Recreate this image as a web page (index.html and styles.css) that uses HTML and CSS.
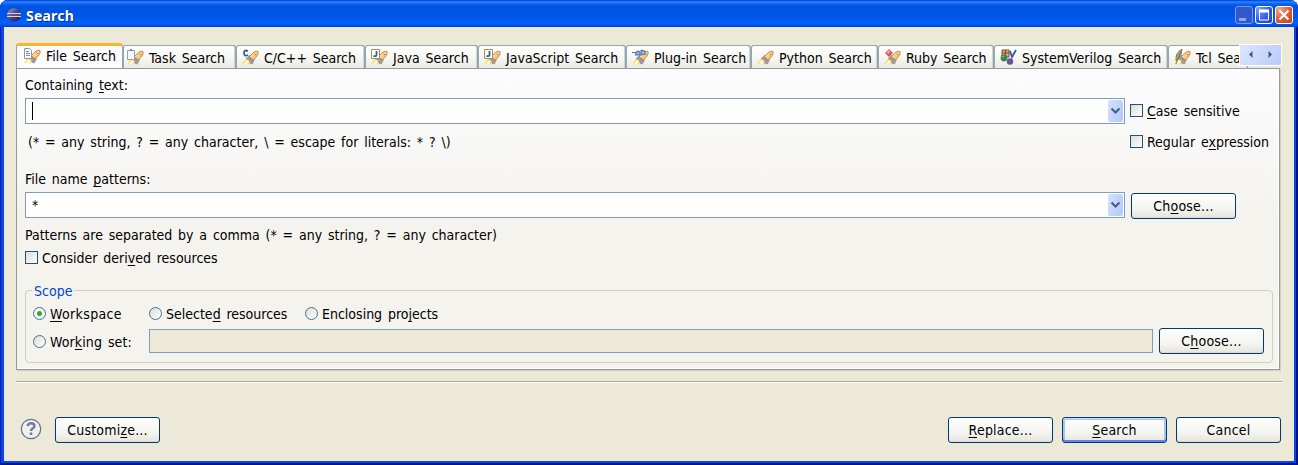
FILE: index.html
```html
<!DOCTYPE html>
<html lang="en">
<head>
<meta charset="utf-8">
<title>Search</title>
<link rel="stylesheet" href="styles.css">
</head>
<body>
<svg class="defs" width="0" height="0">
  <defs>
    <linearGradient id="gold" x1="0" y1="0" x2="1" y2="1"><stop offset="0" stop-color="#fff0b8"/><stop offset="1" stop-color="#f0aa50"/></linearGradient>
    <linearGradient id="ball" x1="0" y1="0" x2="1" y2="1"><stop offset="0" stop-color="#a6a0c8"/><stop offset=".5" stop-color="#4b427e"/><stop offset="1" stop-color="#231848"/></linearGradient>
    <g id="rocket">
      <path d="M0 15.5L3 10.5 5 9.5 9 13 6 15.5 4 14.5Z" fill="#ffdc70"/>
      <path d="M2 14.5L5 11 7 12.5 5 15Z" fill="#fffbe0"/>
      <path d="M4 9.5L8 6 12.5 10.5 10.5 15 8 14.5 7.5 11.5Z" fill="#a29ca3" stroke="#87808a" stroke-width=".5"/>
      <path d="M7 8L12 3Q14 1.8 16 2.5 16.8 4.5 15 7L11 11.5Z" fill="url(#gold)" stroke="#c58543" stroke-width=".9"/>
      <path d="M12.8 4.7l1.3 1.3M7.7 8.2l3.2 3.2" stroke="#8b7768" stroke-width="1"/>
    </g>
  </defs>
</svg>
<div class="window">
  <header class="titlebar">
    <svg class="logo" width="16" height="16" viewBox="0 0 16 16"><circle cx="8" cy="8" r="6.8" fill="url(#ball)"/><path d="M1 6.5h14M1 9.5h14" stroke="#d5d1ea" stroke-width="1"/><path d="M1 8h14" stroke="#6862a0" stroke-width="1"/></svg>
    <h1 class="title">Search</h1>
    <div class="controls">
      <span class="control dim"><svg width="17" height="17"><path d="M3 12.5h7" stroke="#8ea7ea" stroke-width="3"/></svg></span>
      <span class="control"><svg width="17" height="17"><path d="M3.5 4v9h9V4" fill="none" stroke="#fff"/><path d="M3 4h10" stroke="#fff" stroke-width="3"/></svg></span>
      <span class="control close"><svg width="17" height="17"><path d="M3.5 3.5l9 9M12.5 3.5l-9 9" stroke="#fff" stroke-width="2.2"/></svg></span>
    </div>
  </header>
  <main class="content">
    <nav class="tabs">
      <div class="tab active"><svg class="icon" viewBox="0 0 17 16"><use href="#rocket"/><path d="M.5 .5h5l2 2v8h-7z" fill="#f6f8fd" stroke="#8c9a9b"/><path d="M2 3.5h3M2 5.5h4M2 7.5h4" stroke="#7192b9"/></svg><span>File Search</span></div>
      <div class="tab task"><svg class="icon" viewBox="0 0 17 16"><use href="#rocket"/><path d="M.5 1.5h7v9h-7z" fill="#f4f7fe" stroke="#8fa0bd"/><path d="M3 0h2v1h1v1H2V1h1z" fill="#7f8ca4"/></svg><span>Task Search</span></div>
      <div class="tab cpp"><svg class="icon" viewBox="0 0 17 16"><use href="#rocket"/><path d="M6 2.2Q2 .2 2 4t4 2" fill="none" stroke="#286498" stroke-width="1.8"/></svg><span>C/C++ Search</span></div>
      <div class="tab java"><svg class="icon" viewBox="0 0 17 16"><use href="#rocket"/><path d="M.5 .5h8v9h-8z" fill="#fff" stroke="#a78e56"/><path d="M5.5 2v4q0 1.5-3 1" fill="none" stroke="#286498" stroke-width="1.8"/></svg><span>Java Search</span></div>
      <div class="tab js"><svg class="icon" viewBox="0 0 17 16"><use href="#rocket"/><path d="M.5 .5h8v9h-8z" fill="#fff" stroke="#a78e56"/><path d="M5.5 2v4q0 1.5-3 1" fill="none" stroke="#286498" stroke-width="1.8"/></svg><span>JavaScript Search</span></div>
      <div class="tab plugin"><svg class="icon" viewBox="0 0 17 16"><use href="#rocket"/><path d="M0 3.5h4M3 6l2-4 3 .5V6zM9 1l4 1v3l-4 1z" fill="#8eb5e5" stroke="#4f70ad"/></svg><span>Plug-in Search</span></div>
      <div class="tab python"><svg class="icon" viewBox="0 0 17 16"><use href="#rocket"/></svg><span>Python Search</span></div>
      <div class="tab ruby"><svg class="icon" viewBox="0 0 17 16"><use href="#rocket"/><path d="M1 4l4-4 4 4-4 4z" fill="#ef4b5c"/><path d="M3 3l2-2 1 2-2 2z" fill="#ffb2b9"/></svg><span>Ruby Search</span></div>
      <div class="tab sv"><svg class="icon" viewBox="0 0 17 16"><path d="M2 1h7v7H2zM2 4h7M5.5 1v7" fill="#dcae72" stroke="#7b482c"/><path d="M10 2l2 6 4-7" fill="none" stroke="#315d94" stroke-width="1.8"/><circle cx="4" cy="9" r="3.4" fill="#3e8850"/><circle cx="10" cy="12.5" r="3.2" fill="#6654a0"/><path d="M2 8l2-1" stroke="#9ad098"/></svg><span>SystemVerilog Search</span></div>
      <div class="tab tcl"><svg class="icon" viewBox="0 0 17 16"><use href="#rocket"/><path d="M2 12Q1 4 8 0q0 6-4 10zM2 15L7 2" fill="#b0aa7e" stroke="#706b48" stroke-width=".8"/></svg><span>Tcl Search</span></div>
      <div class="scroller"><svg width="42" height="20"><path d="M12.5 6v7L9 9.5zM28.5 6v7L32 9.5z" fill="#3e5785"/></svg></div>
    </nav>
    <section class="panel">
      <div class="label first">Containing <u>t</u>ext:</div>
      <div class="row query"><div class="combo"><i class="caret"></i><span class="drop"><svg width="15" height="22"><path d="M3.5 8.5l4 4 4-4" fill="none" stroke="#465b87" stroke-width="2"/></svg></span></div><label class="check"><i class="box"></i><span><u>C</u>ase sensitive</span></label></div>
      <div class="row hint"><span class="hinttext">(* = any string, ? = any character, \ = escape for literals: * ? \)</span><label class="check"><i class="box"></i><span class="regex">Regular e<u>x</u>pression</span></label></div>
      <div class="label second">File name <u>p</u>atterns:</div>
      <div class="row"><div class="combo"><span class="star">*</span><span class="drop"><svg width="15" height="22"><path d="M3.5 8.5l4 4 4-4" fill="none" stroke="#465b87" stroke-width="2"/></svg></span></div><button class="button choose">Ch<u>o</u>ose...</button></div>
      <div class="note"><span>Patterns are separated by a comma (* = any string, ? = any character)</span></div>
      <label class="check derived"><i class="box"></i><span>Consider deri<u>v</u>ed resources</span></label>
      <fieldset class="scope"><legend>Scope</legend>
        <div class="row radios"><label class="radio workspace"><i class="dot on"></i><span><u>W</u>orkspace</span></label><label class="radio selected"><i class="dot"></i><span>Selecte<u>d</u> resources</span></label><label class="radio"><i class="dot"></i><span>Enclosing pro<u>j</u>ects</span></label></div>
        <div class="row working"><label class="radio set"><i class="dot"></i><span>Wor<u>k</u>ing set:</span></label><div class="field"></div><button class="button">C<u>h</u>oose...</button></div>
      </fieldset>
    </section>
    <hr class="separator">
    <footer class="footer">
      <svg class="help" width="22" height="22"><circle cx="11" cy="11" r="9.7" fill="#f0f0ed" stroke="#66728d" stroke-width="1.2"/><path d="M7.5 8Q8 5.2 11 5.2q3.5 0 3.5 2.8 0 1.6-2 2.6Q11 11.4 11 13" fill="none" stroke="#707b9d" stroke-width="2.4"/><path d="M11 14.5v2.5" stroke="#707b9d" stroke-width="2.6"/></svg>
      <button class="button customize">Customi<u>z</u>e...</button>
      <div class="actions"><button class="button"><u>R</u>eplace...</button><button class="button default"><u>S</u>earch</button><button class="button">Cancel</button></div>
    </footer>
  </main>
</div>
</body>
</html>
```
FILE: styles.css
```css
* { box-sizing: border-box; }
body { margin: 0; background: #fff; font: 14px/16px "DejaVu Sans Condensed", "DejaVu Sans", sans-serif; font-stretch: condensed; word-spacing: 1.8px; color: #000; }
.defs { position: absolute; }
u { text-decoration-thickness: 1px; text-underline-offset: 2px; text-decoration-skip-ink: none; }
.window { width: 1298px; height: 465px; display: flex; flex-direction: column; background: #0847e4; border-radius: 8px 8px 0 0; overflow: hidden; box-shadow: inset 1px 0 #001dba, inset -2px -2px #00138c; }
.titlebar { height: 27px; flex: none; display: flex; align-items: center; padding: 3px 5px 0 6px; background: linear-gradient(#0831d9 0, #288eff 2px, #166df3 3px, #0054e3 6px, #0055e5 17px, #0060fd 22px, #005df7 24px, #003dd7 27px); }
.logo { flex: none; }
.title { margin: 1px 0 0 4px; font: bold 14px/20px "Noto Sans", sans-serif; letter-spacing: .2px; color: #fff; text-shadow: 1px 1px #0a2a88; }
.controls { margin-left: auto; display: flex; gap: 2px; }
.control { width: 18px; height: 18px; border: 1px solid #fff; border-radius: 3px; background: radial-gradient(circle at 20% 15%, #7f9ff5, #315de7 55%, #1647c8); overflow: hidden; }
.control svg { display: block; }
.dim { border-color: #7897e8; background: #3159ce; }
.close { background: radial-gradient(circle at 20% 15%, #f6a48d, #e25a36 55%, #c43a11); }
.content { flex: 1; margin: 0 4px 4px; padding: 16px 13px 0 12px; background: #ece9d8; }
.tabs { height: 25px; display: flex; align-items: flex-end; position: relative; overflow: hidden; margin-right: -2px; }
.tab { height: 23px; flex: none; display: flex; align-items: center; padding: 1px 0 0 5px; border: 1px solid #91a7b4; border-bottom: 0; border-radius: 3px 3px 0 0; background: linear-gradient(#fff, #f5f5f1 60%, #ecebe5); box-shadow: inset -1px 0 #d5d5cf; white-space: nowrap; overflow: hidden; }
.icon { width: 17px; height: 16px; flex: none; margin: -2px 5px 0 0; }
.active { width: 107px; height: 25px; border-top: 3px solid #f9b52d; background: #fcfcfe; box-shadow: none; padding: 0 0 2px 7px; }
.active .icon { margin-top: 0; }
.task { width: 113px; padding-left: 3px; }
.cpp { width: 129px; } .java { width: 113px; } .js { width: 148px; } .plugin { width: 125px; } .python { width: 127px; } .ruby { width: 116px; } .sv { width: 174px; } .tcl { width: 80px; }
.scroller { position: absolute; right: 1px; top: 1px; width: 43px; height: 22px; border: 1px solid #fff; background: linear-gradient(120deg, #dce6fc, #b9cbf9); }
.scroller svg { display: block; }
.panel { width: 1264px; height: 302px; border: 1px solid #919b9c; padding: 8px 6px 0 8px; background: linear-gradient(#fcfcfe, #f4f3ee 50%, #f4f3ee); box-shadow: inset -1px -1px #fff, 1px 1px #d0cebf; }
.label { height: 16px; }
.second { margin-top: 21px; }
.row { display: flex; }
.first + .row, .second + .row { margin-top: 5px; }
.combo { width: 1100px; height: 26px; flex: none; border: 1px solid #7f9db9; background: #fff; display: flex; align-items: center; padding: 1px 1px 1px 6px; }
.drop { width: 15px; height: 22px; margin-left: auto; border-radius: 2px; background: linear-gradient(110deg, #d4e1fd, #b1c8fa); }
.drop svg { display: block; }
.caret { width: 1px; height: 18px; background: #000; margin-top: -1px; }
.check { display: flex; align-items: center; height: 16px; white-space: nowrap; }
.query .check { margin: 5px 0 0 5px; }
.box { width: 13px; height: 13px; border: 1px solid #1c5180; background: linear-gradient(135deg, #dcdcd7, #fff); margin: -2px 4px 0 0; flex: none; }
.hint { margin-top: 10px; }
.hinttext { width: 1102px; padding-left: 3px; margin-right: 3px; flex: none; }
.button { width: 105px; height: 26px; flex: none; border: 1px solid #003c74; border-radius: 3px; background: linear-gradient(#fff, #f3f3ef 65%, #e5e3dc); font: inherit; letter-spacing: .2px; padding: 0; color: #000; box-shadow: inset 0 -1px #dedbd0; }
.choose { margin: 1px 0 0 6px; }
.note { margin-top: 8px; height: 16px; }
.derived { margin-top: 7px; }
.scope { position: relative; height: 73px; width: 1248px; margin: 24px 0 0; padding: 15px 8px 0 7px; border: 1px solid #d0d0bf; border-radius: 4px; }
legend { position: absolute; top: -8px; left: 6px; padding: 0 2px; height: 16px; background: #f4f3ee; color: #0046d5; }
.radio { display: flex; align-items: center; height: 16px; }
.dot { width: 13px; height: 13px; flex: none; border: 1px solid #48708e; border-radius: 50%; margin: -2px 4px 0 0; background: linear-gradient(135deg, #dcdcd7, #fff); }
.on { background: radial-gradient(circle, #2cae2c 0 2px, #f5f5f2 3px); }
.workspace { width: 116px; letter-spacing: .35px; } .selected { width: 156px; }
.working { margin-top: 6px; align-items: center; }
.set { width: 116px; padding-top: 2px; letter-spacing: .1px; }
.field { width: 1004px; height: 24px; margin-right: 6px; border: 1px solid #7f9db9; background: #ece9d8; }
.separator { width: 1266px; margin: 11px 0 0; border: 0; border-top: 1px solid #aca899; border-bottom: 1px solid #fff; }
.footer { display: flex; align-items: center; margin-top: 34px; padding-left: 4px; }
.help { margin-top: -2px; }
.customize { margin-left: 13px; }
.actions { display: flex; gap: 9px; margin-left: 788px; }
.default { box-shadow: inset 0 1px #cee0ff, inset 0 -2px #6982ee, inset 0 0 0 2px #a9c3f0; }
```
